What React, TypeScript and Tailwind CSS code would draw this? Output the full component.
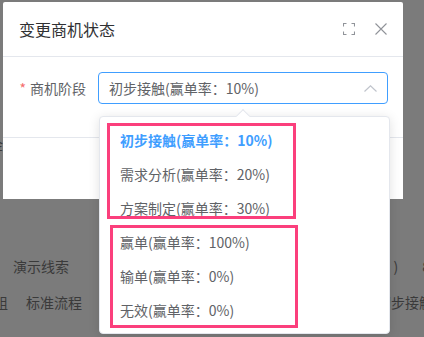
const options = [
  { label: "初步接触(赢单率：10%)", active: true },
  { label: "需求分析(赢单率：20%)" },
  { label: "方案制定(赢单率：30%)" },
  { label: "赢单(赢单率：100%)" },
  { label: "输单(赢单率：0%)" },
  { label: "无效(赢单率：0%)" },
];

export default function App() {
  return (
    <div
      className="relative w-[424px] h-[337px] overflow-hidden bg-[#7b7b7b] text-sm"
      style={{ fontFamily: '"Noto Sans CJK SC", "Noto Sans", sans-serif' }}
    >
      {/* page behind the overlay */}
      <div className="flex flex-col text-[#3a3a3a]">
        <div className="h-[134px]" />
        <div className="h-[20px] -ml-[11px] leading-[20px]">金</div>
        <div className="h-[94px]" />
        <div className="flex h-[36px] items-center">
          <span className="ml-[13px]">演示线索</span>
          <span className="ml-auto mr-[24px]">)</span>
          <span className="-mr-[6px]">8</span>
        </div>
        <div className="flex h-[36px] items-center">
          <span className="-ml-[6px]">组</span>
          <span className="ml-[18px]">标准流程</span>
          <span className="ml-auto -mr-[9px]">初步接触</span>
        </div>
      </div>

      {/* dialog */}
      <div className="absolute left-[3px] top-[2px] w-[400px] h-[197px] bg-white rounded-t-[2px]">
        <div className="flex h-[55px] items-center border-b border-[#e4e7ed] pl-4 pr-[16px]">
          <span className="text-base text-[#303133]">变更商机状态</span>
          <div className="ml-auto flex items-center gap-[20px] text-[#909399]">
            <svg width="12" height="12" viewBox="0 0 12 12" fill="none" stroke="currentColor" strokeWidth="1.1">
              <path d="M0.5 3.5V0.5H3.5M8.5 0.5H11.5V3.5M11.5 8.5V11.5H8.5M3.5 11.5H0.5V8.5" />
            </svg>
            <svg width="12" height="12" viewBox="0 0 12 12" fill="none" stroke="currentColor" strokeWidth="1.1">
              <path d="M0.5 0.5L11.5 11.5M11.5 0.5L0.5 11.5" />
            </svg>
          </div>
        </div>
        <div className="h-[81px] border-b border-[#e4e7ed] pt-[15px]">
          <div className="flex items-center">
            <div className="w-[95px] pr-3 text-right text-[#606266]">
              <span className="text-[#f56c6c] mr-[4px]">*</span>商机阶段
            </div>
            <div className="flex h-[32px] w-[290px] items-center rounded border border-[#409eff] px-[10px] text-[#606266]">
              <span>初步接触(赢单率：10%)</span>
              <svg className="ml-auto" width="13" height="7" viewBox="0 0 13 7" fill="none" stroke="#c0c4cc" strokeWidth="1.2">
                <path d="M0.5 6.5L6.5 0.8L12.5 6.5" />
              </svg>
            </div>
          </div>
        </div>
      </div>

      {/* dropdown */}
      <div className="absolute left-[99px] top-[116px] w-[291px] h-[218px] rounded border border-[#e4e7ed] bg-white pt-[6px] shadow-[0_2px_12px_rgba(0,0,0,0.12)]">
        <div className="absolute -top-[6px] left-[138px] h-[10px] w-[10px] rotate-45 border-l border-t border-[#e4e7ed] bg-white" />
        {options.map((o) => (
          <div
            key={o.label}
            className={
              o.active
                ? "relative flex h-[34px] items-center pl-[20px] font-bold text-[#409eff]"
                : "relative flex h-[34px] items-center pl-[20px] text-[#606266]"
            }
          >
            {o.label}
          </div>
        ))}
        <div className="absolute left-[7px] top-[6px] h-[96px] w-[189px] border-[3px] border-[#fb3f7c]" />
        <div className="absolute left-[10px] top-[108px] h-[103px] w-[188px] border-[3px] border-[#fb3f7c]" />
      </div>
    </div>
  );
}
